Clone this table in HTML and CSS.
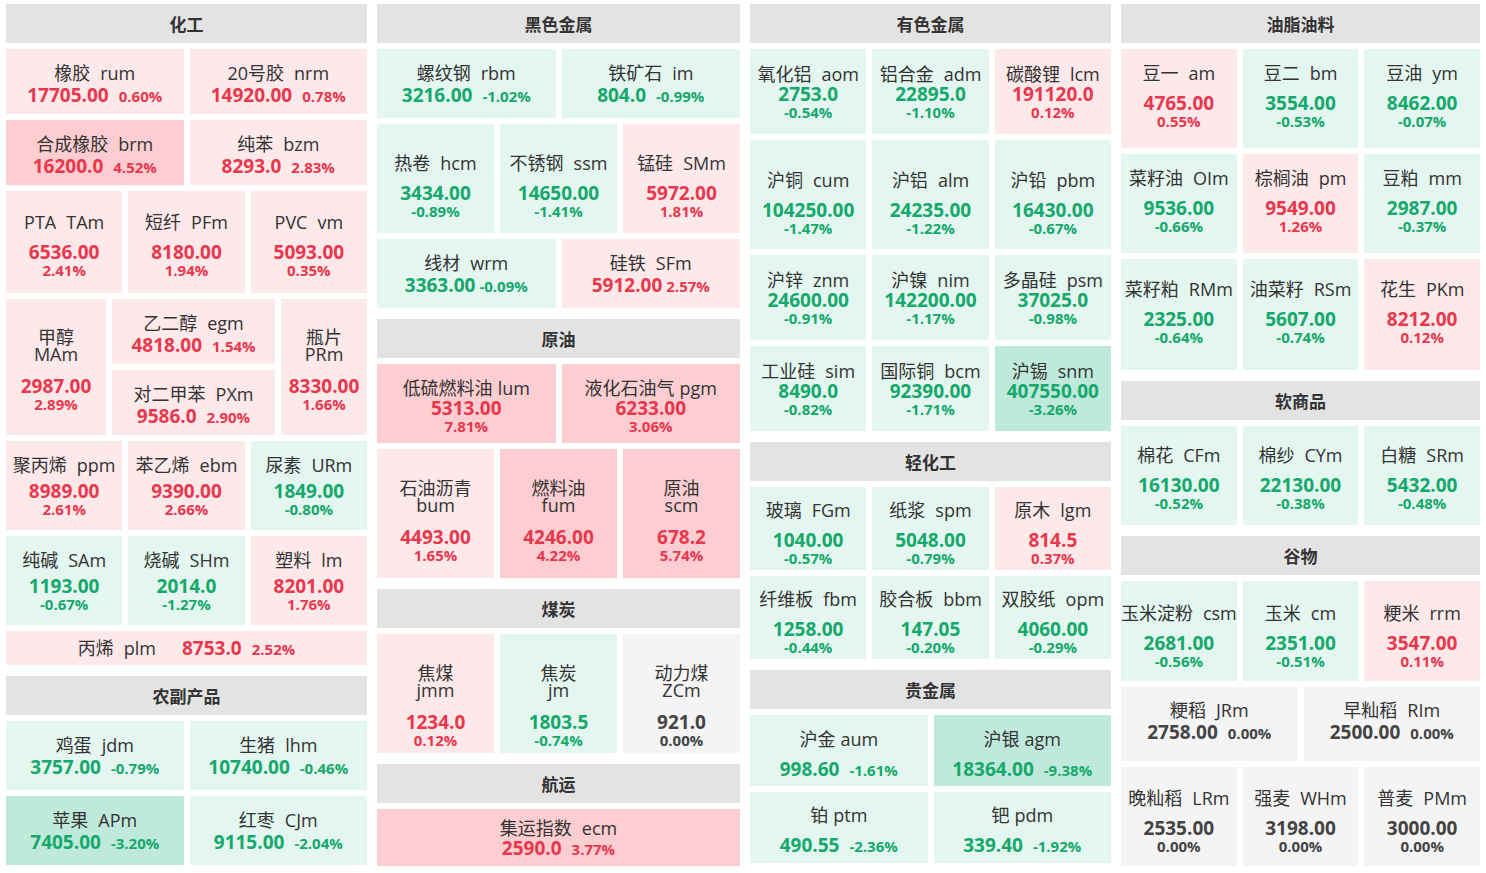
FILE: index.html
```html
<!DOCTYPE html>
<html lang="zh-CN">
<head>
<meta charset="utf-8">
<title>期货板块行情</title>
<link rel="stylesheet" href="styles.css">
</head>
<body>
<div class="board">

  <!-- Column 1 -->
  <div class="col">
    <div class="grp">
      <div class="hd">化工</div>
      <div class="row c2 h65">
        <div class="t r1 in o2"><div class="nm">橡胶<i>rum</i></div><div class="vl"><span class="pr">17705.00</span><span class="pc">0.60%</span></div></div>
        <div class="t r1 in o2"><div class="nm">20号胶<i>nrm</i></div><div class="vl"><span class="pr">14920.00</span><span class="pc">0.78%</span></div></div>
      </div>
      <div class="row c2 h65">
        <div class="t r2 in o2"><div class="nm">合成橡胶<i>brm</i></div><div class="vl"><span class="pr">16200.0</span><span class="pc">4.52%</span></div></div>
        <div class="t r1 in o2"><div class="nm">纯苯<i>bzm</i></div><div class="vl"><span class="pr">8293.0</span><span class="pc">2.83%</span></div></div>
      </div>
      <div class="row c3 h102">
        <div class="t r1 st g10 o2"><div class="nm">PTA<i>TAm</i></div><div class="vl"><span class="pr">6536.00</span><span class="pc">2.41%</span></div></div>
        <div class="t r1 st g10 o2"><div class="nm">短纤<i>PFm</i></div><div class="vl"><span class="pr">8180.00</span><span class="pc">1.94%</span></div></div>
        <div class="t r1 st g10 o2"><div class="nm">PVC<i>vm</i></div><div class="vl"><span class="pr">5093.00</span><span class="pc">0.35%</span></div></div>
      </div>
      <div class="row cD h136">
        <div class="t r1 wr o3"><div class="nm">甲醇<i>MAm</i></div><div class="vl"><span class="pr">2987.00</span><span class="pc">2.89%</span></div></div>
        <div class="stackcol">
          <div class="t r1 in o2"><div class="nm">乙二醇<i>egm</i></div><div class="vl"><span class="pr">4818.00</span><span class="pc">1.54%</span></div></div>
          <div class="t r1 in o2"><div class="nm">对二甲苯<i>PXm</i></div><div class="vl"><span class="pr">9586.0</span><span class="pc">2.90%</span></div></div>
        </div>
        <div class="t r1 wr o3"><div class="nm">瓶片<i>PRm</i></div><div class="vl"><span class="pr">8330.00</span><span class="pc">1.66%</span></div></div>
      </div>
      <div class="row c3 h89">
        <div class="t r1 st g7"><div class="nm">聚丙烯<i>ppm</i></div><div class="vl"><span class="pr">8989.00</span><span class="pc">2.61%</span></div></div>
        <div class="t r1 st g7"><div class="nm">苯乙烯<i>ebm</i></div><div class="vl"><span class="pr">9390.00</span><span class="pc">2.66%</span></div></div>
        <div class="t g1 st g7"><div class="nm">尿素<i>URm</i></div><div class="vl"><span class="pr">1849.00</span><span class="pc">-0.80%</span></div></div>
      </div>
      <div class="row c3 h89">
        <div class="t g1 st g7"><div class="nm">纯碱<i>SAm</i></div><div class="vl"><span class="pr">1193.00</span><span class="pc">-0.67%</span></div></div>
        <div class="t g1 st g7"><div class="nm">烧碱<i>SHm</i></div><div class="vl"><span class="pr">2014.0</span><span class="pc">-1.27%</span></div></div>
        <div class="t r1 st g7"><div class="nm">塑料<i>lm</i></div><div class="vl"><span class="pr">8201.00</span><span class="pc">1.76%</span></div></div>
      </div>
      <div class="row c1 h34">
        <div class="t r1 one"><div class="nm">丙烯<i>plm</i></div><div class="vl"><span class="pr">8753.0</span><span class="pc">2.52%</span></div></div>
      </div>
    </div>
    <div class="grp">
      <div class="hd">农副产品</div>
      <div class="row c2 h69">
        <div class="t g1 in"><div class="nm">鸡蛋<i>jdm</i></div><div class="vl"><span class="pr">3757.00</span><span class="pc">-0.79%</span></div></div>
        <div class="t g1 in"><div class="nm">生猪<i>lhm</i></div><div class="vl"><span class="pr">10740.00</span><span class="pc">-0.46%</span></div></div>
      </div>
      <div class="row c2 h69">
        <div class="t g2 in"><div class="nm">苹果<i>APm</i></div><div class="vl"><span class="pr">7405.00</span><span class="pc">-3.20%</span></div></div>
        <div class="t g1 in"><div class="nm">红枣<i>CJm</i></div><div class="vl"><span class="pr">9115.00</span><span class="pc">-2.04%</span></div></div>
      </div>
    </div>
  </div>

  <!-- Column 2 -->
  <div class="col">
    <div class="grp">
      <div class="hd">黑色金属</div>
      <div class="row c2 h69">
        <div class="t g1 in"><div class="nm">螺纹钢<i>rbm</i></div><div class="vl"><span class="pr">3216.00</span><span class="pc">-1.02%</span></div></div>
        <div class="t g1 in"><div class="nm">铁矿石<i>im</i></div><div class="vl"><span class="pr">804.0</span><span class="pc">-0.99%</span></div></div>
      </div>
      <div class="row c3 h109">
        <div class="t g1 st g10 o7"><div class="nm">热卷<i>hcm</i></div><div class="vl"><span class="pr">3434.00</span><span class="pc">-0.89%</span></div></div>
        <div class="t g1 st g10 o7"><div class="nm">不锈钢<i>ssm</i></div><div class="vl"><span class="pr">14650.00</span><span class="pc">-1.41%</span></div></div>
        <div class="t r1 st g10 o7"><div class="nm">锰硅<i>SMm</i></div><div class="vl"><span class="pr">5972.00</span><span class="pc">1.81%</span></div></div>
      </div>
      <div class="row c2 h69">
        <div class="t g1 in tight"><div class="nm">线材<i>wrm</i></div><div class="vl"><span class="pr">3363.00</span><span class="pc">-0.09%</span></div></div>
        <div class="t r1 in tight"><div class="nm">硅铁<i>SFm</i></div><div class="vl"><span class="pr">5912.00</span><span class="pc">2.57%</span></div></div>
      </div>
    </div>
    <div class="grp">
      <div class="hd">原油</div>
      <div class="row c2 h79">
        <div class="t r2 st g0 sp1 o2"><div class="nm">低硫燃料油<i>lum</i></div><div class="vl"><span class="pr">5313.00</span><span class="pc">7.81%</span></div></div>
        <div class="t r2 st g0 sp1 o2"><div class="nm">液化石油气<i>pgm</i></div><div class="vl"><span class="pr">6233.00</span><span class="pc">3.06%</span></div></div>
      </div>
      <div class="row c3 h129">
        <div class="t r1 wr o8"><div class="nm">石油沥青<i>bum</i></div><div class="vl"><span class="pr">4493.00</span><span class="pc">1.65%</span></div></div>
        <div class="t r2 wr o8"><div class="nm">燃料油<i>fum</i></div><div class="vl"><span class="pr">4246.00</span><span class="pc">4.22%</span></div></div>
        <div class="t r2 wr o8"><div class="nm">原油<i>scm</i></div><div class="vl"><span class="pr">678.2</span><span class="pc">5.74%</span></div></div>
      </div>
    </div>
    <div class="grp">
      <div class="hd">煤炭</div>
      <div class="row c3 h119">
        <div class="t r1 wr o13"><div class="nm">焦煤<i>jmm</i></div><div class="vl"><span class="pr">1234.0</span><span class="pc">0.12%</span></div></div>
        <div class="t g1 wr o13"><div class="nm">焦炭<i>jm</i></div><div class="vl"><span class="pr">1803.5</span><span class="pc">-0.74%</span></div></div>
        <div class="t n wr o13"><div class="nm">动力煤<i>ZCm</i></div><div class="vl"><span class="pr">921.0</span><span class="pc">0.00%</span></div></div>
      </div>
    </div>
    <div class="grp">
      <div class="hd">航运</div>
      <div class="row c1 h57">
        <div class="t r2 in g0"><div class="nm">集运指数<i>ecm</i></div><div class="vl"><span class="pr">2590.0</span><span class="pc">3.77%</span></div></div>
      </div>
    </div>
  </div>

  <!-- Column 3 -->
  <div class="col">
    <div class="grp">
      <div class="hd">有色金属</div>
      <div class="row c3 h85">
        <div class="t g1 st g0"><div class="nm">氧化铝<i>aom</i></div><div class="vl"><span class="pr">2753.0</span><span class="pc">-0.54%</span></div></div>
        <div class="t g1 st g0"><div class="nm">铝合金<i>adm</i></div><div class="vl"><span class="pr">22895.0</span><span class="pc">-1.10%</span></div></div>
        <div class="t r1 st g0"><div class="nm">碳酸锂<i>lcm</i></div><div class="vl"><span class="pr">191120.0</span><span class="pc">0.12%</span></div></div>
      </div>
      <div class="row c3 h109">
        <div class="t g1 st g10 o8"><div class="nm">沪铜<i>cum</i></div><div class="vl"><span class="pr">104250.00</span><span class="pc">-1.47%</span></div></div>
        <div class="t g1 st g10 o8"><div class="nm">沪铝<i>alm</i></div><div class="vl"><span class="pr">24235.00</span><span class="pc">-1.22%</span></div></div>
        <div class="t g1 st g10 o8"><div class="nm">沪铅<i>pbm</i></div><div class="vl"><span class="pr">16430.00</span><span class="pc">-0.67%</span></div></div>
      </div>
      <div class="row c3 h85">
        <div class="t g1 st g0"><div class="nm">沪锌<i>znm</i></div><div class="vl"><span class="pr">24600.00</span><span class="pc">-0.91%</span></div></div>
        <div class="t g1 st g0"><div class="nm">沪镍<i>nim</i></div><div class="vl"><span class="pr">142200.00</span><span class="pc">-1.17%</span></div></div>
        <div class="t g1 st g0"><div class="nm">多晶硅<i>psm</i></div><div class="vl"><span class="pr">37025.0</span><span class="pc">-0.98%</span></div></div>
      </div>
      <div class="row c3 h85">
        <div class="t g1 st g0"><div class="nm">工业硅<i>sim</i></div><div class="vl"><span class="pr">8490.0</span><span class="pc">-0.82%</span></div></div>
        <div class="t g1 st g0"><div class="nm">国际铜<i>bcm</i></div><div class="vl"><span class="pr">92390.00</span><span class="pc">-1.71%</span></div></div>
        <div class="t g2 st g0"><div class="nm">沪锡<i>snm</i></div><div class="vl"><span class="pr">407550.00</span><span class="pc">-3.26%</span></div></div>
      </div>
    </div>
    <div class="grp">
      <div class="hd">轻化工</div>
      <div class="row c3 h83">
        <div class="t g1 st g10 o4"><div class="nm">玻璃<i>FGm</i></div><div class="vl"><span class="pr">1040.00</span><span class="pc">-0.57%</span></div></div>
        <div class="t g1 st g10 o4"><div class="nm">纸浆<i>spm</i></div><div class="vl"><span class="pr">5048.00</span><span class="pc">-0.79%</span></div></div>
        <div class="t r1 st g10 o4"><div class="nm">原木<i>lgm</i></div><div class="vl"><span class="pr">814.5</span><span class="pc">0.37%</span></div></div>
      </div>
      <div class="row c3 h83">
        <div class="t g1 st g10 o4"><div class="nm">纤维板<i>fbm</i></div><div class="vl"><span class="pr">1258.00</span><span class="pc">-0.44%</span></div></div>
        <div class="t g1 st g10 o4"><div class="nm">胶合板<i>bbm</i></div><div class="vl"><span class="pr">147.05</span><span class="pc">-0.20%</span></div></div>
        <div class="t g1 st g10 o4"><div class="nm">双胶纸<i>opm</i></div><div class="vl"><span class="pr">4060.00</span><span class="pc">-0.29%</span></div></div>
      </div>
    </div>
    <div class="grp">
      <div class="hd">贵金属</div>
      <div class="row c2 h71">
        <div class="t g1 in g10 sp1 o3"><div class="nm">沪金<i>aum</i></div><div class="vl"><span class="pr">998.60</span><span class="pc">-1.61%</span></div></div>
        <div class="t g2 in g10 sp1 o3"><div class="nm">沪银<i>agm</i></div><div class="vl"><span class="pr">18364.00</span><span class="pc">-9.38%</span></div></div>
      </div>
      <div class="row c2 h71">
        <div class="t g1 in g10 sp1 o2"><div class="nm">铂<i>ptm</i></div><div class="vl"><span class="pr">490.55</span><span class="pc">-2.36%</span></div></div>
        <div class="t g1 in g10 sp1 o2"><div class="nm">钯<i>pdm</i></div><div class="vl"><span class="pr">339.40</span><span class="pc">-1.92%</span></div></div>
      </div>
    </div>
  </div>

  <!-- Column 4 -->
  <div class="col">
    <div class="grp">
      <div class="hd">油脂油料</div>
      <div class="row c3 h99">
        <div class="t r1 st g10 u3"><div class="nm">豆一<i>am</i></div><div class="vl"><span class="pr">4765.00</span><span class="pc">0.55%</span></div></div>
        <div class="t g1 st g10 u3"><div class="nm">豆二<i>bm</i></div><div class="vl"><span class="pr">3554.00</span><span class="pc">-0.53%</span></div></div>
        <div class="t g1 st g10 u3"><div class="nm">豆油<i>ym</i></div><div class="vl"><span class="pr">8462.00</span><span class="pc">-0.07%</span></div></div>
      </div>
      <div class="row c3 h99">
        <div class="t g1 st g10 u3"><div class="nm">菜籽油<i>OIm</i></div><div class="vl"><span class="pr">9536.00</span><span class="pc">-0.66%</span></div></div>
        <div class="t r1 st g10 u3"><div class="nm">棕榈油<i>pm</i></div><div class="vl"><span class="pr">9549.00</span><span class="pc">1.26%</span></div></div>
        <div class="t g1 st g10 u3"><div class="nm">豆粕<i>mm</i></div><div class="vl"><span class="pr">2987.00</span><span class="pc">-0.37%</span></div></div>
      </div>
      <div class="row c3 h111">
        <div class="t g1 st g10 u3"><div class="nm">菜籽粕<i>RMm</i></div><div class="vl"><span class="pr">2325.00</span><span class="pc">-0.64%</span></div></div>
        <div class="t g1 st g10 u3"><div class="nm">油菜籽<i>RSm</i></div><div class="vl"><span class="pr">5607.00</span><span class="pc">-0.74%</span></div></div>
        <div class="t r1 st g10 u3"><div class="nm">花生<i>PKm</i></div><div class="vl"><span class="pr">8212.00</span><span class="pc">0.12%</span></div></div>
      </div>
    </div>
    <div class="grp">
      <div class="hd">软商品</div>
      <div class="row c3 h99">
        <div class="t g1 st g10 o2"><div class="nm">棉花<i>CFm</i></div><div class="vl"><span class="pr">16130.00</span><span class="pc">-0.52%</span></div></div>
        <div class="t g1 st g10 o2"><div class="nm">棉纱<i>CYm</i></div><div class="vl"><span class="pr">22130.00</span><span class="pc">-0.38%</span></div></div>
        <div class="t g1 st g10 o2"><div class="nm">白糖<i>SRm</i></div><div class="vl"><span class="pr">5432.00</span><span class="pc">-0.48%</span></div></div>
      </div>
    </div>
    <div class="grp">
      <div class="hd">谷物</div>
      <div class="row c3 h100">
        <div class="t g1 st g10 o4"><div class="nm">玉米淀粉<i>csm</i></div><div class="vl"><span class="pr">2681.00</span><span class="pc">-0.56%</span></div></div>
        <div class="t g1 st g10 o4"><div class="nm">玉米<i>cm</i></div><div class="vl"><span class="pr">2351.00</span><span class="pc">-0.51%</span></div></div>
        <div class="t r1 st g10 o4"><div class="nm">粳米<i>rrm</i></div><div class="vl"><span class="pr">3547.00</span><span class="pc">0.11%</span></div></div>
      </div>
      <div class="row c2 h74">
        <div class="t n in u4"><div class="nm">粳稻<i>JRm</i></div><div class="vl"><span class="pr">2758.00</span><span class="pc">0.00%</span></div></div>
        <div class="t n in u4"><div class="nm">早籼稻<i>RIm</i></div><div class="vl"><span class="pr">2500.00</span><span class="pc">0.00%</span></div></div>
      </div>
      <div class="row c3 h99">
        <div class="t n st g10 o4"><div class="nm">晚籼稻<i>LRm</i></div><div class="vl"><span class="pr">2535.00</span><span class="pc">0.00%</span></div></div>
        <div class="t n st g10 o4"><div class="nm">强麦<i>WHm</i></div><div class="vl"><span class="pr">3198.00</span><span class="pc">0.00%</span></div></div>
        <div class="t n st g10 o4"><div class="nm">普麦<i>PMm</i></div><div class="vl"><span class="pr">3000.00</span><span class="pc">0.00%</span></div></div>
      </div>
    </div>
  </div>

</div>
</body>
</html>
```

FILE: styles.css
```css
* { box-sizing: border-box; }

body {
  margin: 0;
  padding: 4px 6px 0;
  background: #ffffff;
  font-family: "Open Sans", "Noto Sans CJK SC", sans-serif;
  color: #333;
}

.board {
  display: grid;
  grid-template-columns: 361px 363px 361px 359px;
  column-gap: 10px;
  align-items: start;
}

.col {
  display: flex;
  flex-direction: column;
  gap: 11px;
}

.grp {
  display: flex;
  flex-direction: column;
  gap: 6px;
}

.hd {
  height: 39px;
  background: #e3e3e3;
  display: flex;
  align-items: center;
  justify-content: center;
  font-family: "Noto Sans CJK SC", sans-serif;
  font-weight: 700;
  font-size: 17px;
  color: #333;
}

.row { display: grid; gap: 6px; }
.c1 { grid-template-columns: 1fr; }
.c2 { grid-template-columns: 1fr 1fr; }
.c3 { grid-template-columns: 1fr 1fr 1fr; }
.cD { grid-template-columns: 100px 1fr 86px; }

.stackcol {
  display: grid;
  grid-template-rows: 1fr 1fr;
  gap: 6px;
}

.h34 { height: 34px; }
.h57 { height: 57px; }
.h65 { height: 65px; }
.h69 { height: 69px; }
.h71 { height: 71px; }
.h74 { height: 74px; }
.h79 { height: 79px; }
.h83 { height: 83px; }
.h85 { height: 85px; }
.h89 { height: 89px; }
.h99 { height: 99px; }
.h100 { height: 100px; }
.h102 { height: 102px; }
.h109 { height: 109px; }
.h111 { height: 111px; }
.h119 { height: 119px; }
.h129 { height: 129px; }
.h136 { height: 136px; }

/* tile */
.t {
  display: flex;
  flex-direction: column;
  align-items: center;
  justify-content: center;
  text-align: center;
  white-space: nowrap;
  overflow: hidden;
}

/* vertical nudges of the label block */
.o2 { padding-top: 4px; }
.o3 { padding-top: 6px; }
.o4 { padding-top: 8px; }
.o7 { padding-top: 14px; }
.o8 { padding-top: 16px; }
.o13 { padding-top: 26px; }
.u3 { padding-bottom: 6px; }
.u4 { padding-bottom: 8px; }

.r1 { background: #fde8ea; }
.r2 { background: #fccdd1; }
.g1 { background: #e3f6ef; }
.g2 { background: #bfeadb; }
.n  { background: #f4f4f4; }

.r1 .vl, .r2 .vl { color: #e8384e; }
.g1 .vl, .g2 .vl { color: #16a86c; }
.n .vl { color: #444; }

.nm {
  font-size: 18px;
  line-height: 22px;
  color: #333;
  margin-bottom: 1px;
}
.nm i {
  font-style: normal;
  margin-left: 10px;
}
.sp1 .nm i { margin-left: 5px; }

.vl {
  display: flex;
  flex-direction: column;
  align-items: center;
  font-weight: 700;
}
.pr { font-size: 19px; line-height: 19px; }
.pc { font-size: 15px; line-height: 16px; }

/* inline value line */
.in .nm { margin-bottom: 2px; }
.in .vl { flex-direction: row; align-items: baseline; }
.in .pc { margin-left: 10px; }
.in.tight .pc { margin-left: 4px; }

/* gap variants between name and value */
.g0 .nm { margin-bottom: 0; }
.g7 .nm { margin-bottom: 6px; }
.g10 .nm { margin-bottom: 10px; }
.in.g10 .nm { margin-bottom: 10px; }

/* wrapped name (two lines) */
.wr .nm {
  line-height: 17px;
  margin-bottom: 14px;
}
.wr .nm i {
  display: block;
  margin-left: 0;
}

/* everything on one line */
.one { flex-direction: row; align-items: baseline; }
.one .nm { margin: 0 26px 0 0; line-height: 34px; }
.one .vl { flex-direction: row; align-items: baseline; }
.one .pc { margin-left: 10px; }
```
